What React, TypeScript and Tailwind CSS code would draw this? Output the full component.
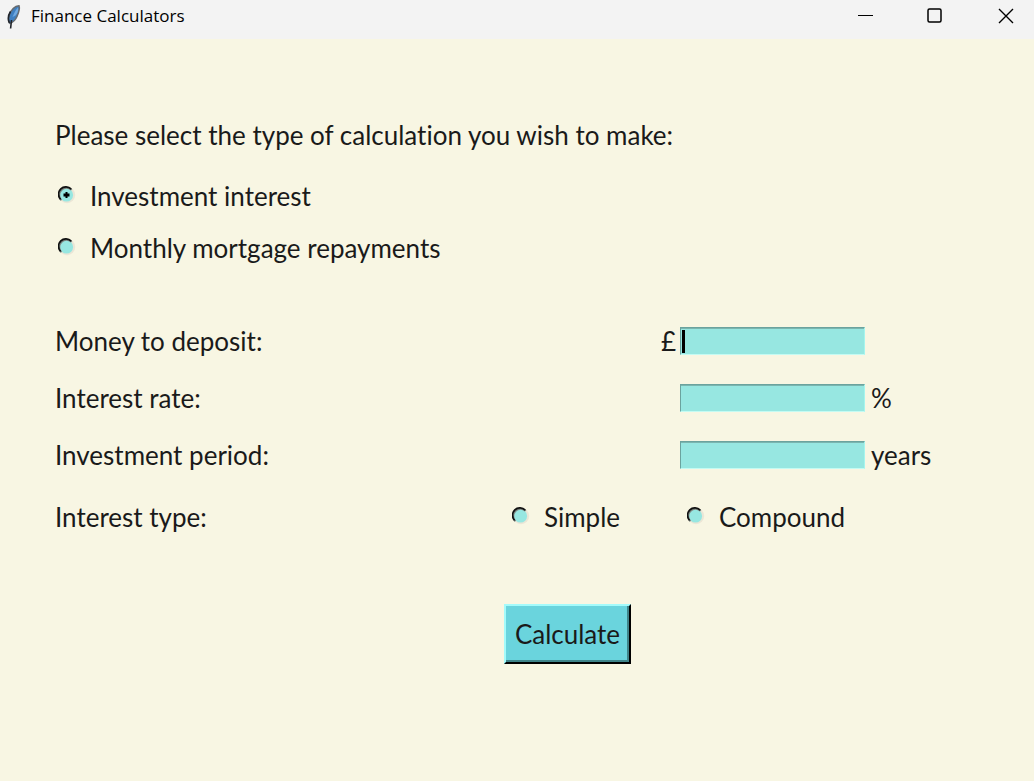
import { useState } from "react";

type RadioProps = {
  name: string;
  label: string;
  checked: boolean;
  onSelect: () => void;
};

function Radio({ name, label, checked, onSelect }: RadioProps) {
  return (
    <label className="flex h-8 items-center gap-[14px]">
      <span className="relative mb-0.5 size-[18px] shrink-0">
        <input
          type="radio"
          name={name}
          checked={checked}
          onChange={onSelect}
          className="block size-[18px] appearance-none rounded-full outline-none"
        />
        <svg viewBox="0 0 18 18" className="pointer-events-none absolute inset-0 size-[18px]" aria-hidden="true">
          <circle cx="9" cy="9" r="8.2" fill="#ebe6d6" />
          <circle cx="8.5" cy="9" r="6.6" fill="#97e7e1" />
          <path d="M3.4 14.300A7 7 0 0 1 13.600 3.900" fill="none" stroke="#77827d" strokeWidth="2" />
          <path d="M2.600 13.300A7.200 7.200 0 0 1 13.200 3.100" fill="none" stroke="#111" strokeWidth="1.700" />
          {checked && <path d="M7.500 6h2v1.500h2v3h-2v1.500h-2v-1.500h-2v-3h2z" fill="#000" />}
        </svg>
      </span>
      <span>{label}</span>
    </label>
  );
}

type FieldProps = {
  id: string;
  label: string;
  prefix?: string;
  suffix?: string;
  active?: boolean;
};

function Field({ id, label, prefix, suffix, active }: FieldProps) {
  const [value, setValue] = useState("");
  return (
    <div className="flex h-8 items-center">
      <label htmlFor={id} className="flex-1">
        {label}
      </label>
      <div className="flex w-[318px] items-center">
        <span className="w-[19px]">{prefix}</span>
        <span className="relative mr-1.5 block">
          <input
            id={id}
            type="text"
            value={value}
            onChange={(e) => setValue(e.target.value)}
            className="block h-7 w-[185px] border border-t-[#6ba39e] border-r-[#a5f5ee] border-b-[#c4fbf3] border-l-[#6ba39e] bg-[#97e7e1] px-0.5 text-[22px] shadow-[inset_0_1px_0_#7ab5af] outline-none"
          />
          {active && value === "" && (
            <span className="pointer-events-none absolute top-[3px] left-0.5 h-[23px] w-[3px] bg-black" />
          )}
        </span>
        <span>{suffix}</span>
      </div>
    </div>
  );
}

function FeatherIcon() {
  return (
    <svg viewBox="0 0 16 26" className="h-[26px] w-4" aria-hidden="true">
      <path
        d="M13 2.800C9 3.200 5.200 7 3.200 12c-1 3.200-.8 6.200.6 8.300 3-.8 5.800-3.600 7.200-6.800 1.600-3.600 3-7.800 2-10.700z"
        fill="#3f7fc0"
        stroke="#666b70"
        strokeWidth="1.500"
      />
      <path d="M12 4.500C9.500 7 8.200 10 6.500 14l3-1.500c2-2 3.100-5 2.500-8z" fill="#70a9e0" />
      <path d="M4.500 8.500C2.300 12 1.800 16.500 3.400 20M5.500 17L4.600 25.500" fill="none" stroke="#20242b" strokeWidth="1.600" />
    </svg>
  );
}

export default function App() {
  const [calculation, setCalculation] = useState("investment");
  const [interest, setInterest] = useState("");

  return (
    <div className="flex min-h-screen flex-col bg-[#f8f4e1] font-['Lato','Liberation_Sans',sans-serif] text-[26px] leading-8 text-[#1a1a1a] [font-variant-ligatures:none]">
      <header className="flex h-[39px] items-start justify-between bg-[#f3f3f3] pl-1.5 text-black">
        <div className="flex items-center gap-[9px]">
          <FeatherIcon />
          <h1 className="font-['Open_Sans','Noto_Sans',sans-serif] text-[17px] leading-8">Finance Calculators</h1>
        </div>
        <div className="flex h-8">
          <button type="button" aria-label="Minimize" className="flex w-[70px] items-center justify-center">
            <svg viewBox="0 0 16 16" className="size-4" aria-hidden="true">
              <path d="M1 7.500h15" stroke="#000" />
            </svg>
          </button>
          <button type="button" aria-label="Maximize" className="flex w-[70px] items-center justify-center">
            <svg viewBox="0 0 16 16" className="size-4" fill="none" aria-hidden="true">
              <rect x="1" y="1" width="13" height="13" rx="1.500" stroke="#000" strokeWidth="1.500" />
            </svg>
          </button>
          <button type="button" aria-label="Close" className="flex w-[64px] items-center justify-end pr-5">
            <svg viewBox="0 0 16 16" className="size-4" aria-hidden="true">
              <path d="M1 1l14 14M15 1L1 15" stroke="#000" strokeWidth="1.400" />
            </svg>
          </button>
        </div>
      </header>

      <main className="flex flex-1 flex-col bg-[#f8f6e3] px-[55px] pt-20">
        <fieldset>
          <legend className="mb-[29px]">Please select the type of calculation you wish to make:</legend>
          <div className="flex flex-col items-start gap-5 pl-[3px]">
            <Radio
              name="calculation"
              label="Investment interest"
              checked={calculation === "investment"}
              onSelect={() => setCalculation("investment")}
            />
            <Radio
              name="calculation"
              label="Monthly mortgage repayments"
              checked={calculation === "mortgage"}
              onSelect={() => setCalculation("mortgage")}
            />
          </div>
        </fieldset>

        <div className="mt-[61px] flex flex-col gap-[25px]">
          <Field id="deposit" label="Money to deposit:" prefix="£" active />
          <Field id="rate" label="Interest rate:" suffix="%" />
          <Field id="period" label="Investment period:" suffix="years" />
        </div>

        <div role="radiogroup" aria-labelledby="interest-type" className="mt-[30px] flex h-8 items-center">
          <span id="interest-type" className="flex-1">
            Interest type:
          </span>
          <div className="flex w-[467px]">
            <div className="w-[175px]">
              <Radio
                name="interest"
                label="Simple"
                checked={interest === "simple"}
                onSelect={() => setInterest("simple")}
              />
            </div>
            <Radio
              name="interest"
              label="Compound"
              checked={interest === "compound"}
              onSelect={() => setInterest("compound")}
            />
          </div>
        </div>

        <div className="mt-[71px] flex justify-center pl-[101px]">
          <button
            type="button"
            className="h-[60px] w-[127px] border-2 border-t-[#a4fbfb] border-r-black border-b-black border-l-[#a4fbfb] bg-[#6ad4dd] shadow-[inset_-2px_-2px_0_#3f8489]"
          >
            Calculate
          </button>
        </div>
      </main>
    </div>
  );
}
